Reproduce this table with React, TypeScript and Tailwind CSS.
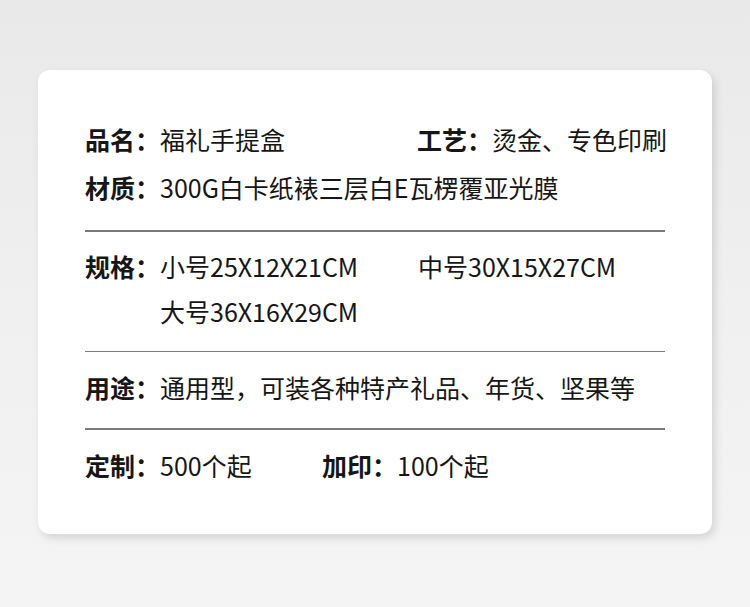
import React from "react";

const font = { fontFamily: '"Noto Sans CJK SC", "Noto Sans", sans-serif' };

function Label({ children }: { children: React.ReactNode }) {
  return <span className="font-semibold">{children}</span>;
}

export default function App() {
  return (
    <div
      className="w-[750px] h-[607px] bg-gradient-to-b from-[#e9e9e9] via-[#f0f0f0] to-[#f4f4f4] pt-[70px] pl-[38px] overflow-hidden"
      style={font}
    >
      <div className="w-[674px] h-[464px] bg-white rounded-[12px] shadow-[3px_4px_8px_rgba(0,0,0,0.13)] pl-[47px] pt-[45px] text-[25px] text-[#161616] whitespace-nowrap">
        <div className="leading-[48px]">
          <div className="flex">
            <div className="w-[332px] shrink-0">
              <Label>品名：</Label>福礼手提盒
            </div>
            <div>
              <Label>工艺：</Label>烫金、专色印刷
            </div>
          </div>
          <div>
            <Label>材质：</Label>300G白卡纸裱三层白E瓦楞覆亚光膜
          </div>
        </div>
        <div className="mt-[19px] w-[580px] h-[1.5px] bg-[#7a7a7a]" />
        <div className="mt-[12px] leading-[45px] flex">
          <div className="w-[75px] shrink-0">
            <Label>规格：</Label>
          </div>
          <div>
            <div className="flex">
              <div className="w-[258px] shrink-0">小号25X12X21CM</div>
              <div>中号30X15X27CM</div>
            </div>
            <div>大号36X16X29CM</div>
          </div>
        </div>
        <div className="mt-[17px] w-[580px] h-[1.5px] bg-[#7a7a7a]" />
        <div className="mt-[13px] leading-[45px]">
          <Label>用途：</Label>通用型，可装各种特产礼品、年货、坚果等
        </div>
        <div className="mt-[18px] w-[580px] h-[1.5px] bg-[#7a7a7a]" />
        <div className="mt-[13px] leading-[45px] flex">
          <div className="w-[237px] shrink-0">
            <Label>定制：</Label>500个起
          </div>
          <div>
            <Label>加印：</Label>100个起
          </div>
        </div>
      </div>
    </div>
  );
}
